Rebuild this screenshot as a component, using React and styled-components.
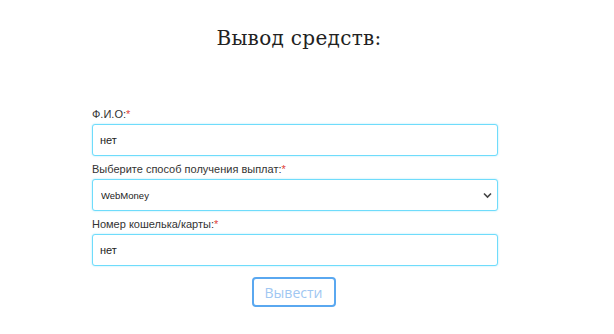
import React from "react";
import styled, { createGlobalStyle } from "styled-components";

const Global = createGlobalStyle`
  html, body { margin: 0; padding: 0; background: #fff; }
  body { font-family: "Liberation Sans", Arial, sans-serif; color: #333; }
`;

const Page = styled.div`
  width: 614px;
  height: 334px;
  display: flex;
  flex-direction: column;
`;

const Title = styled.h2`
  margin: 24px 0 0 0;
  padding-right: 16px;
  text-align: center;
  font-family: "DejaVu Serif", "Liberation Serif", serif;
  font-weight: 400;
  font-size: 20px;
  line-height: 28px;
  color: #222;
  letter-spacing: 0.3px;
`;

const Form = styled.form`
  margin: 55px 0 0 92px;
  width: 406px;
  display: flex;
  flex-direction: column;
`;

const Group = styled.div`
  display: flex;
  flex-direction: column;
  margin-bottom: 6px;
`;

const Label = styled.label`
  font-size: 11px;
  line-height: 15px;
  color: #333;
  margin-bottom: 2px;
`;

const Star = styled.span`
  color: #e0403a;
`;

const Field = styled.input`
  box-sizing: border-box;
  width: 100%;
  height: 32px;
  border: 1.5px solid #6fdcfb;
  border-radius: 3px;
  box-shadow: 0 0 2px rgba(102, 217, 250, 0.6);
  padding: 0 7px;
  font-family: "Liberation Sans", Arial, sans-serif;
  font-size: 11px;
  color: #222;
  outline: none;
  background: #fff;
`;

const SelectWrap = styled.div`
  position: relative;
  width: 100%;
`;

const Select = styled.select`
  box-sizing: border-box;
  width: 100%;
  height: 32px;
  border: 1.5px solid #6fdcfb;
  border-radius: 3px;
  box-shadow: 0 0 2px rgba(102, 217, 250, 0.6);
  padding: 0 8px;
  font-family: "Liberation Sans", Arial, sans-serif;
  font-size: 9.5px;
  color: #222;
  appearance: none;
  background: #fff;
  outline: none;
`;

const Chevron = styled.svg`
  position: absolute;
  right: 6px;
  top: 13px;
  width: 9px;
  height: 7px;
  pointer-events: none;
`;

const ButtonRow = styled.div`
  display: flex;
  justify-content: center;
  margin-top: 5px;
  padding-right: 3px;
`;

const Button = styled.button`
  box-sizing: border-box;
  width: 84px;
  height: 30px;
  border: 2px solid #5aa8f0;
  border-radius: 4px;
  background: #fff;
  color: #9fc7f2;
  font-family: "Open Sans", "Liberation Sans", sans-serif;
  font-size: 14px;
  padding: 0;
`;

export default function App() {
  return (
    <Page>
      <Global />
      <Title>Вывод средств:</Title>
      <Form onSubmit={(e) => e.preventDefault()}>
        <Group>
          <Label>Ф.И.О:<Star>*</Star></Label>
          <Field defaultValue="нет" />
        </Group>
        <Group>
          <Label>Выберите способ получения выплат:<Star>*</Star></Label>
          <SelectWrap>
            <Select defaultValue="WebMoney">
              <option>WebMoney</option>
            </Select>
            <Chevron viewBox="0 0 9 7">
              <path d="M1 1.5 L4.5 5 L8 1.5" fill="none" stroke="#444" strokeWidth="1.6" />
            </Chevron>
          </SelectWrap>
        </Group>
        <Group>
          <Label>Номер кошелька/карты:<Star>*</Star></Label>
          <Field defaultValue="нет" />
        </Group>
        <ButtonRow>
          <Button type="submit">Вывести</Button>
        </ButtonRow>
      </Form>
    </Page>
  );
}
